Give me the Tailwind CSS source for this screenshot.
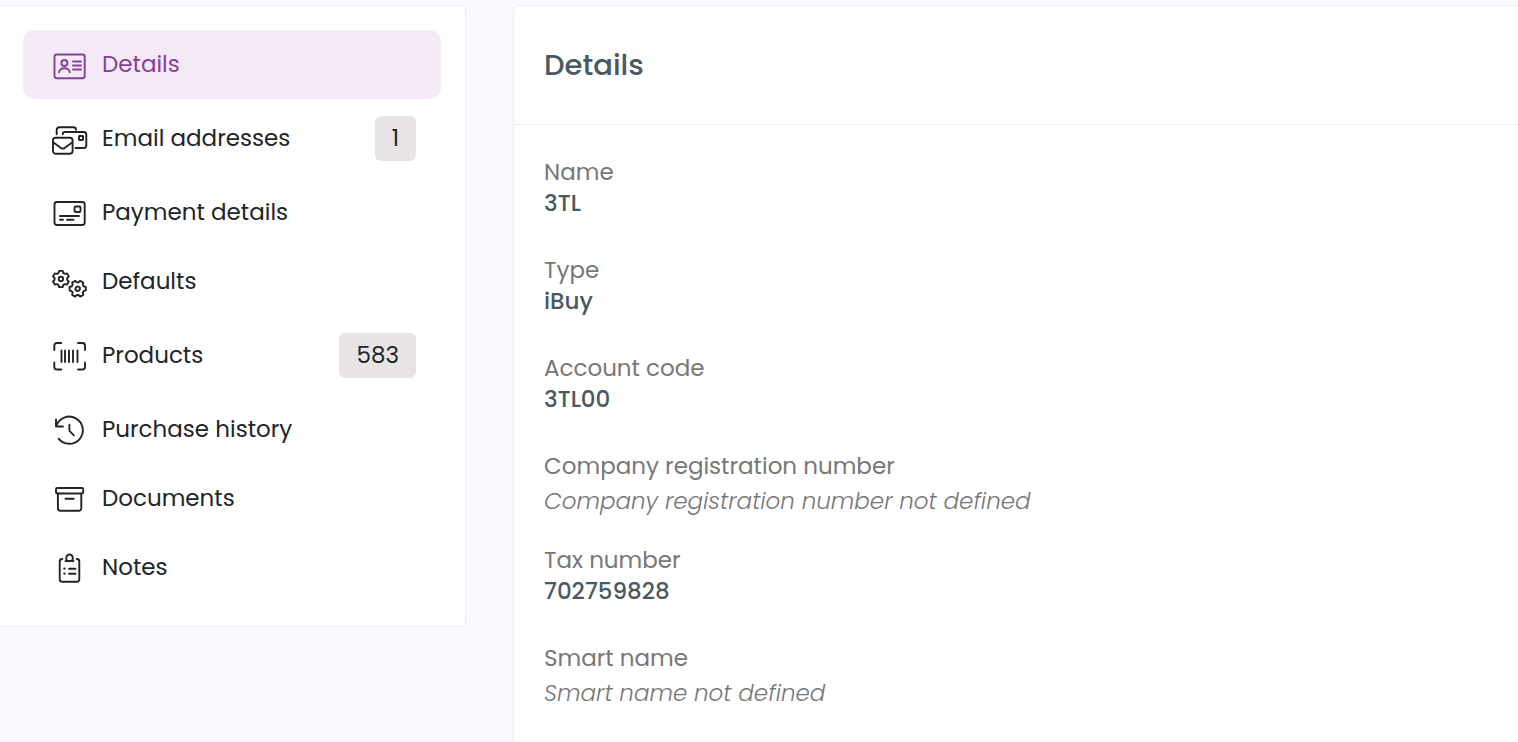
<!DOCTYPE html>
<html lang="en">
  <head>
    <meta charset="UTF-8" />
    <meta name="viewport" content="width=device-width, initial-scale=1.0" />
    <title>Supplier Details</title>
    <!-- Tailwind CSS CDN -->
    <script src="https://cdn.jsdelivr.net/npm/@tailwindcss/browser@4"></script>
  </head>
  <body class="min-h-screen overflow-x-hidden bg-[#f9f9fd] font-[Poppins,Inter,sans-serif] text-[23px] leading-[35px] text-[#212529]">
    <div class="flex min-h-screen items-start gap-[47px] pt-[5px]">
      <!-- Section menu -->
      <aside class="-ml-0.5 w-[468px] shrink-0 rounded-md border border-[#ececf1] bg-white p-6">
        <nav aria-label="Sections">
          <a href="#details" aria-current="page" class="flex items-center gap-3.5 rounded-xl bg-[#f3eaf5] py-[17px] pr-[25px] pl-[29px] text-[#883e9c]">
            <svg class="h-[35px] w-9 shrink-0" viewBox="0 0 36 35" fill="none" stroke="currentColor" stroke-width="1.9" stroke-linecap="round" stroke-linejoin="round" aria-hidden="true">
              <rect x="2.5" y="7.5" width="30.2" height="23.7" rx="2.2" />
              <circle cx="12.4" cy="16" r="3" />
              <path d="M7 25.2c.6-2.6 2.6-4 5.4-4s4.8 1.4 5.4 4M21 14.5h8M21 18.5h8M21 22.5h8" />
            </svg>
            <span>Details</span>
          </a>
          <a href="#emails" class="flex items-center gap-3.5 rounded-xl py-[17px] pr-[25px] pl-[29px]">
            <svg class="h-[35px] w-9 shrink-0" viewBox="0 0 36 35" fill="none" stroke="currentColor" stroke-width="1.9" stroke-linecap="round" stroke-linejoin="round" aria-hidden="true">
              <path d="M4.7 13.2V8.8a2.5 2.5 0 0 1 2.5-2.5h14.3a2.5 2.5 0 0 1 2.5 2.5" />
              <path d="M10.7 13.2a2.2 2.2 0 0 1 2.2-2.2h18.9a2.5 2.5 0 0 1 2.5 2.5v11a2.5 2.5 0 0 1-2.5 2.5h-8.300" />
              <rect x="27" y="15" width="4" height="4" rx=".5" />
              <rect x="1" y="16.700" width="19.600" height="16" rx="2.600" />
              <path d="M1.200 21.300l7.800 5.600c1.100.8 2.500.8 3.600 0l7.800-5.600" />
            </svg>
            <span>Email addresses</span>
            <span class="ml-auto rounded-md bg-[#e8e4e5] px-[17px] py-[5px]">1</span>
          </a>
          <a href="#payment" class="flex items-center gap-3.5 rounded-xl py-[17px] pr-[25px] pl-[29px]">
            <svg class="h-[35px] w-9 shrink-0" viewBox="0 0 36 35" fill="none" stroke="currentColor" stroke-width="1.9" stroke-linecap="round" stroke-linejoin="round" aria-hidden="true">
              <rect x="2.500" y="7" width="30.200" height="23" rx="2.500" />
              <rect x="22.500" y="11.500" width="6" height="5.500" rx="1.300" />
              <path d="M8 21h19M8 24.800h3M15 24.800h6.500" />
            </svg>
            <span>Payment details</span>
          </a>
          <a href="#defaults" class="flex items-center gap-3.5 rounded-xl py-[17px] pr-[25px] pl-[29px]">
            <svg class="h-[35px] w-9 shrink-0" viewBox="0 0 36 35" fill="none" stroke="currentColor" stroke-width="1.9" stroke-linecap="round" stroke-linejoin="round" aria-hidden="true">
              <g transform="translate(8.900 15)">
                <path d="M-2.500-5.900L-1.700-8.100H1.700L2.500-5.900L3.900-5.100L6.100-5.600L7.900-2.600L6.300-.8V.8L7.900 2.600L6.100 5.600L3.900 5.100L2.500 5.900L1.700 8.100H-1.700L-2.500 5.900L-3.900 5.100L-6.100 5.600L-7.900 2.600L-6.300.8V-.8L-7.900-2.600L-6.100-5.600L-3.900-5.100Z" />
                <circle r="2.200" />
              </g>
              <g transform="translate(25.700 24.700) rotate(30)">
                <path d="M-2.500-5.900L-1.700-8.100H1.700L2.500-5.900L3.900-5.100L6.100-5.600L7.900-2.600L6.300-.8V.8L7.900 2.600L6.100 5.600L3.900 5.100L2.500 5.900L1.700 8.100H-1.700L-2.500 5.900L-3.900 5.100L-6.100 5.600L-7.900 2.600L-6.300.8V-.8L-7.900-2.600L-6.100-5.600L-3.900-5.100Z" />
                <circle r="2.200" />
              </g>
            </svg>
            <span>Defaults</span>
          </a>
          <a href="#products" class="flex items-center gap-3.5 rounded-xl py-[17px] pr-[25px] pl-[29px]">
            <svg class="h-[35px] w-9 shrink-0" viewBox="0 0 36 35" fill="none" stroke="currentColor" stroke-width="1.9" stroke-linecap="round" stroke-linejoin="round" aria-hidden="true">
              <path d="M9.300 5H4.800a2.500 2.500 0 0 0-2.500 2.500V12M26 5h4.500A2.500 2.500 0 0 1 33 7.500V12M9.300 31.500H4.800A2.500 2.500 0 0 1 2.300 29v-4.500M26 31.500h4.500A2.500 2.500 0 0 0 33 29v-4.500" />
              <path d="M9.500 12.500v11.500M13 12.500v11.500M17 12.500v11.500M21 12.500v11.500M25.500 12.500v11.500" />
            </svg>
            <span>Products</span>
            <span class="ml-auto rounded-md bg-[#e8e4e5] px-[17px] py-[5px]">583</span>
          </a>
          <a href="#history" class="flex items-center gap-3.5 rounded-xl py-[17px] pr-[25px] pl-[29px]">
            <svg class="h-[35px] w-9 shrink-0" viewBox="0 0 36 35" fill="none" stroke="currentColor" stroke-width="1.9" stroke-linecap="round" stroke-linejoin="round" aria-hidden="true">
              <path d="M4.300 14A13.600 13.600 0 1 1 6.600 26.700" />
              <path d="M4 7.500v7h7M17.400 12.800v6l4.500 4.500" />
            </svg>
            <span>Purchase history</span>
          </a>
          <a href="#documents" class="flex items-center gap-3.5 rounded-xl py-[17px] pr-[25px] pl-[29px]">
            <svg class="h-[35px] w-9 shrink-0" viewBox="0 0 36 35" fill="none" stroke="currentColor" stroke-width="1.9" stroke-linecap="round" stroke-linejoin="round" aria-hidden="true">
              <rect x="4" y="7" width="27.200" height="5.500" rx="1.200" />
              <path d="M5.900 12.500v14.800a2.500 2.500 0 0 0 2.500 2.500h18.400a2.500 2.500 0 0 0 2.500-2.500V12.500M13.500 17.700h8.200" />
            </svg>
            <span>Documents</span>
          </a>
          <a href="#notes" class="flex items-center gap-3.5 rounded-xl py-[17px] pr-[25px] pl-[29px]">
            <svg class="h-[35px] w-9 shrink-0" viewBox="0 0 36 35" fill="none" stroke="currentColor" stroke-width="1.9" stroke-linecap="round" stroke-linejoin="round" aria-hidden="true">
              <path d="M10.300 9h-.1a2.500 2.500 0 0 0-2.500 2.500v17.700a2.500 2.500 0 0 0 2.500 2.500h14.600a2.500 2.500 0 0 0 2.500-2.500V11.500a2.500 2.500 0 0 0-2.500-2.500h-.1" />
              <path d="M13.500 11h8M15.300 10.700c-1.100-.8-1.200-2.100-1-3a3.100 3.100 0 0 1 6.400 0c.2.900.1 2.200-1 3M17 18.700h6.500M17 23.700h6.500" />
              <path stroke-width="2.300" d="M12.400 18.700h.1M12.400 23.700h.1" />
            </svg>
            <span>Notes</span>
          </a>
        </nav>
      </aside>

      <!-- Supplier details -->
      <main id="details" class="-mr-3 min-w-0 flex-1 self-stretch rounded-t-md border border-b-0 border-[#ececf1] bg-white">
        <header class="border-b border-[#ececf1] px-[30px] py-10">
          <h1 class="text-[29px] leading-[38px] font-medium text-[#495962]">Details</h1>
        </header>
        <dl class="px-[30px] pt-8 leading-[31px]">
          <div class="mb-9">
            <dt class="text-[#777777]">Name</dt>
            <dd class="font-medium text-[#495962]">3TL</dd>
          </div>
          <div class="mb-9">
            <dt class="text-[#777777]">Type</dt>
            <dd class="font-medium text-[#495962]">iBuy</dd>
          </div>
          <div class="mb-9">
            <dt class="text-[#777777]">Account code</dt>
            <dd class="font-medium text-[#495962]">3TL00</dd>
          </div>
          <div class="mb-7">
            <dt class="text-[#777777]">Company registration number</dt>
            <dd class="pt-1 font-light text-[#777777] italic">Company registration number not defined</dd>
          </div>
          <div class="mb-9">
            <dt class="text-[#777777]">Tax number</dt>
            <dd class="font-medium text-[#495962]">702759828</dd>
          </div>
          <div>
            <dt class="text-[#777777]">Smart name</dt>
            <dd class="pt-1 font-light text-[#777777] italic">Smart name not defined</dd>
          </div>
        </dl>
      </main>
    </div>
  </body>
</html>
